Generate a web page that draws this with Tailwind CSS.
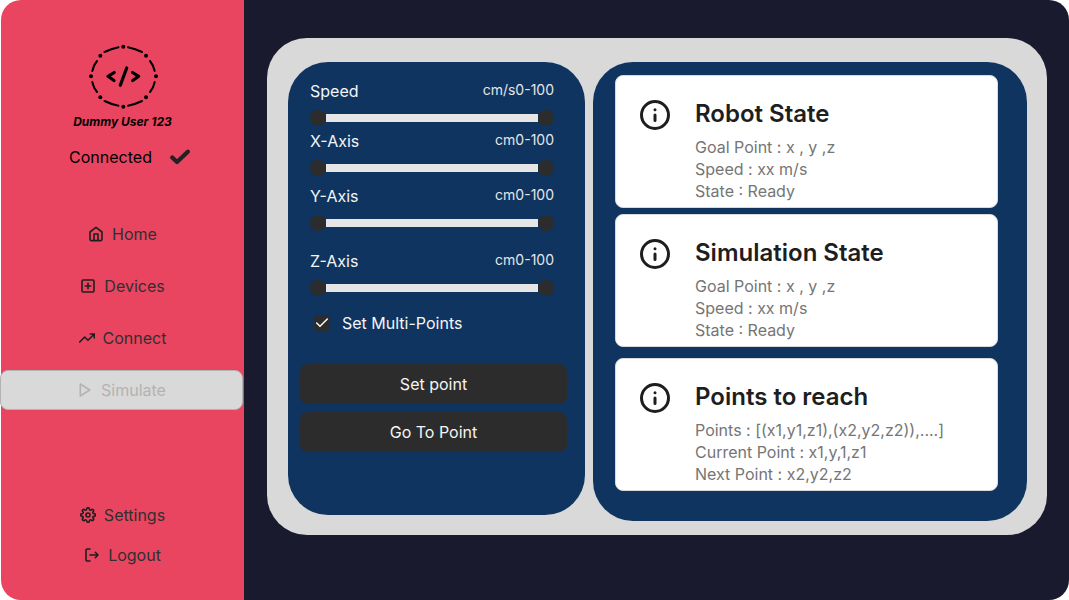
<!DOCTYPE html>
<html lang="en">
<head>
<meta charset="utf-8">
<meta name="viewport" content="width=device-width, initial-scale=1">
<title>Simulate</title>
<script src="https://cdn.jsdelivr.net/npm/@tailwindcss/browser@4"></script>
</head>
<body class="bg-white font-['Inter',sans-serif] text-base leading-[22px]">
<div class="ml-px flex min-h-screen">
  <aside class="flex w-[243px] shrink-0 flex-col rounded-l-[20px] bg-[#e94560] pb-[25px] pt-11 text-[#303030]">
    <div class="flex flex-col items-center text-black">
      <svg class="ml-0.5 h-[66px] w-[71px]" viewBox="0 0 71 66" fill="none" stroke="#000" stroke-linecap="round" stroke-linejoin="round" aria-hidden="true">
        <path stroke-width="2" d="M16.500 8Q23 4.800 30.500 3.300M40 3.300Q47.500 4.800 54 8M16.500 57Q23 60.200 30.500 61.700M54 57Q47.500 60.200 40 61.700M9 17Q5.300 21.500 4.300 27M4.300 38Q5.300 43.500 9 48M62 17Q65.700 21.500 66.700 27M66.700 38Q65.700 43.500 62 48"/>
        <g fill="#000" stroke="none">
          <circle cx="35.300" cy="2.700" r="2"/><circle cx="58" cy="11.700" r="2"/><circle cx="68" cy="32.300" r="2"/><circle cx="58" cy="53.300" r="2"/>
          <circle cx="35.300" cy="62.700" r="2"/><circle cx="12.300" cy="53.300" r="2"/><circle cx="3" cy="32.300" r="2"/><circle cx="12.300" cy="11.700" r="2"/>
        </g>
        <path stroke-width="3.200" d="M26.200 28.500L20 32.300L26 36.500M38.700 24L32.300 41.300M44.500 28.500L50.700 32.300L44.700 36.500"/>
      </svg>
      <p class="mt-px text-xs leading-[22px] font-bold italic">Dummy User 123</p>
      <div class="mt-[13px] flex items-center gap-[18px] pl-[14px]">
        <span>Connected</span>
        <svg class="h-4 w-5" viewBox="0 0 20 16" fill="none" stroke="#222" stroke-width="4.200" stroke-linecap="round" stroke-linejoin="round" aria-hidden="true"><path d="M2.300 8.500L7 13L17.800 2.800"/></svg>
      </div>
    </div>

    <nav class="mt-[46px] flex grow flex-col gap-3" aria-label="Main">
      <a href="#home" class="flex h-10 items-center justify-center gap-2">
        <svg class="size-4" viewBox="0 0 16 16" fill="none" stroke="#1e1e1e" stroke-width="1.600" stroke-linecap="round" stroke-linejoin="round" aria-hidden="true"><path d="M6 14.600V8H10V14.600M2 6L8 1.400L14 6V13.300A1.300 1.300 0 0 1 12.700 14.600H3.300A1.300 1.300 0 0 1 2 13.300Z"/></svg>
        Home
      </a>
      <a href="#devices" class="flex h-10 items-center justify-center gap-2">
        <svg class="size-4" viewBox="0 0 16 16" fill="none" stroke="#1e1e1e" stroke-width="1.600" stroke-linecap="round" stroke-linejoin="round" aria-hidden="true"><rect x="2" y="2" width="12" height="12" rx="1.300"/><path d="M8 5.300V10.700M5.300 8H10.700"/></svg>
        Devices
      </a>
      <a href="#connect" class="flex h-10 items-center justify-center gap-2">
        <svg class="size-4" viewBox="0 0 16 16" fill="none" stroke="#1e1e1e" stroke-width="1.600" stroke-linecap="round" stroke-linejoin="round" aria-hidden="true"><path d="M15.300 4L9 10.300L5.700 7L.7 12M11.300 4H15.300V8"/></svg>
        Connect
      </a>
      <a href="#simulate" aria-current="page" class="-ml-px mr-px flex h-10 items-center justify-center gap-2 rounded-lg border border-[#b3b3b3] bg-[#d9d9d9] text-[#b3b3b3]">
        <svg class="size-4" viewBox="0 0 16 16" fill="none" stroke="currentColor" stroke-width="1.600" stroke-linecap="round" stroke-linejoin="round" aria-hidden="true"><path d="M3.300 2L12.700 8L3.300 14Z"/></svg>
        Simulate
      </a>
    </nav>

    <nav class="flex flex-col" aria-label="Account">
      <a href="#settings" class="flex h-10 items-center justify-center gap-2">
        <svg class="size-4" viewBox="0 0 24 24" fill="none" stroke="#1e1e1e" stroke-width="2.400" stroke-linecap="round" stroke-linejoin="round" aria-hidden="true"><circle cx="12" cy="12" r="3"/><path d="M19.400 15a1.650 1.650 0 0 0 .33 1.820l.06.06a2 2 0 0 1-2.830 2.830l-.06-.06a1.650 1.650 0 0 0-1.820-.33 1.650 1.650 0 0 0-1 1.510V21a2 2 0 0 1-4 0v-.09A1.650 1.650 0 0 0 9 19.400a1.650 1.650 0 0 0-1.820.33l-.06.06a2 2 0 0 1-2.830-2.830l.06-.06a1.650 1.650 0 0 0 .33-1.820 1.650 1.650 0 0 0-1.510-1H3a2 2 0 0 1 0-4h.09A1.650 1.650 0 0 0 4.600 9a1.650 1.650 0 0 0-.33-1.820l-.06-.06a2 2 0 0 1 2.830-2.830l.06.06a1.650 1.650 0 0 0 1.820.33H9a1.650 1.650 0 0 0 1-1.510V3a2 2 0 0 1 4 0v.09a1.650 1.650 0 0 0 1 1.510 1.650 1.650 0 0 0 1.820-.33l.06-.06a2 2 0 0 1 2.830 2.830l-.06.06a1.650 1.650 0 0 0-.33 1.820V9a1.650 1.650 0 0 0 1.510 1H21a2 2 0 0 1 0 4h-.09a1.650 1.650 0 0 0-1.510 1z"/></svg>
        Settings
      </a>
      <a href="#logout" class="flex h-10 items-center justify-center gap-2">
        <svg class="size-4" viewBox="0 0 16 16" fill="none" stroke="#1e1e1e" stroke-width="1.600" stroke-linecap="round" stroke-linejoin="round" aria-hidden="true"><path d="M6 14H3.300A1.300 1.300 0 0 1 2 12.700V3.300A1.300 1.300 0 0 1 3.300 2H6M11.300 10.700L14 8L11.300 5.300M14 8H6"/></svg>
        Logout
      </a>
    </nav>
  </aside>

  <main class="grow rounded-r-[20px] bg-[#1a1a2e] pb-16 pl-[23px] pr-[22px] pt-[38px]">
    <div class="grid grid-cols-[297fr_434fr] items-start gap-2 rounded-[40px] bg-[#d9d9d9] pb-[14px] pl-[21px] pr-5 pt-6">

      <form class="rounded-[40px] bg-[#0f3460] px-3 pb-[63px] pt-[18px] text-[#f5f5f5]">
        <div class="pl-[10px] pr-[19px]">
          <fieldset class="mb-1">
            <div class="mb-2 flex items-start justify-between"><span>Speed</span><span class="text-sm leading-5 text-[#e6e6e6]">cm/s0-100</span></div>
            <div class="grid items-center">
              <div class="col-start-1 row-start-1 mx-4 h-2 bg-[#e6e6e6]"></div>
              <input type="range" aria-label="Speed minimum" min="0" max="100" value="0" class="pointer-events-none col-start-1 row-start-1 h-4 w-full appearance-none bg-transparent [&::-webkit-slider-thumb]:pointer-events-auto [&::-webkit-slider-thumb]:size-4 [&::-webkit-slider-thumb]:appearance-none [&::-webkit-slider-thumb]:rounded-full [&::-webkit-slider-thumb]:bg-[#2c2c2c]">
              <input type="range" aria-label="Speed maximum" min="0" max="100" value="100" class="pointer-events-none col-start-1 row-start-1 h-4 w-full appearance-none bg-transparent [&::-webkit-slider-thumb]:pointer-events-auto [&::-webkit-slider-thumb]:size-4 [&::-webkit-slider-thumb]:appearance-none [&::-webkit-slider-thumb]:rounded-full [&::-webkit-slider-thumb]:bg-[#2c2c2c]">
            </div>
          </fieldset>
          <fieldset class="mb-[9px]">
            <div class="mb-2 flex items-start justify-between"><span>X-Axis</span><span class="text-sm leading-5 text-[#e6e6e6]">cm0-100</span></div>
            <div class="grid items-center">
              <div class="col-start-1 row-start-1 mx-4 h-2 bg-[#e6e6e6]"></div>
              <input type="range" aria-label="X-Axis minimum" min="0" max="100" value="0" class="pointer-events-none col-start-1 row-start-1 h-4 w-full appearance-none bg-transparent [&::-webkit-slider-thumb]:pointer-events-auto [&::-webkit-slider-thumb]:size-4 [&::-webkit-slider-thumb]:appearance-none [&::-webkit-slider-thumb]:rounded-full [&::-webkit-slider-thumb]:bg-[#2c2c2c]">
              <input type="range" aria-label="X-Axis maximum" min="0" max="100" value="100" class="pointer-events-none col-start-1 row-start-1 h-4 w-full appearance-none bg-transparent [&::-webkit-slider-thumb]:pointer-events-auto [&::-webkit-slider-thumb]:size-4 [&::-webkit-slider-thumb]:appearance-none [&::-webkit-slider-thumb]:rounded-full [&::-webkit-slider-thumb]:bg-[#2c2c2c]">
            </div>
          </fieldset>
          <fieldset class="mb-[19px]">
            <div class="mb-2 flex items-start justify-between"><span>Y-Axis</span><span class="text-sm leading-5 text-[#e6e6e6]">cm0-100</span></div>
            <div class="grid items-center">
              <div class="col-start-1 row-start-1 mx-4 h-2 bg-[#e6e6e6]"></div>
              <input type="range" aria-label="Y-Axis minimum" min="0" max="100" value="0" class="pointer-events-none col-start-1 row-start-1 h-4 w-full appearance-none bg-transparent [&::-webkit-slider-thumb]:pointer-events-auto [&::-webkit-slider-thumb]:size-4 [&::-webkit-slider-thumb]:appearance-none [&::-webkit-slider-thumb]:rounded-full [&::-webkit-slider-thumb]:bg-[#2c2c2c]">
              <input type="range" aria-label="Y-Axis maximum" min="0" max="100" value="100" class="pointer-events-none col-start-1 row-start-1 h-4 w-full appearance-none bg-transparent [&::-webkit-slider-thumb]:pointer-events-auto [&::-webkit-slider-thumb]:size-4 [&::-webkit-slider-thumb]:appearance-none [&::-webkit-slider-thumb]:rounded-full [&::-webkit-slider-thumb]:bg-[#2c2c2c]">
            </div>
          </fieldset>
          <fieldset class="mb-4">
            <div class="mb-2 flex items-start justify-between"><span>Z-Axis</span><span class="text-sm leading-5 text-[#e6e6e6]">cm0-100</span></div>
            <div class="grid items-center">
              <div class="col-start-1 row-start-1 mx-4 h-2 bg-[#e6e6e6]"></div>
              <input type="range" aria-label="Z-Axis minimum" min="0" max="100" value="0" class="pointer-events-none col-start-1 row-start-1 h-4 w-full appearance-none bg-transparent [&::-webkit-slider-thumb]:pointer-events-auto [&::-webkit-slider-thumb]:size-4 [&::-webkit-slider-thumb]:appearance-none [&::-webkit-slider-thumb]:rounded-full [&::-webkit-slider-thumb]:bg-[#2c2c2c]">
              <input type="range" aria-label="Z-Axis maximum" min="0" max="100" value="100" class="pointer-events-none col-start-1 row-start-1 h-4 w-full appearance-none bg-transparent [&::-webkit-slider-thumb]:pointer-events-auto [&::-webkit-slider-thumb]:size-4 [&::-webkit-slider-thumb]:appearance-none [&::-webkit-slider-thumb]:rounded-full [&::-webkit-slider-thumb]:bg-[#2c2c2c]">
            </div>
          </fieldset>
          <div class="flex items-center gap-3 pl-1">
            <span class="grid size-4 place-items-center">
              <input id="multi" type="checkbox" checked class="peer col-start-1 row-start-1 size-4 appearance-none rounded bg-[#2c2c2c]">
              <svg class="pointer-events-none invisible col-start-1 row-start-1 size-4 peer-checked:visible" viewBox="0 0 16 16" fill="none" stroke="#f5f5f5" stroke-width="1.600" stroke-linecap="round" stroke-linejoin="round" aria-hidden="true"><path d="M13.300 4L6 11.300L2.700 8"/></svg>
            </span>
            <label for="multi">Set Multi-Points</label>
          </div>
        </div>
        <div class="mr-1.5 mt-[30px] flex flex-col gap-2">
          <button type="button" class="h-10 rounded-lg bg-[#2c2c2c]">Set point</button>
          <button type="button" class="h-10 rounded-lg bg-[#2c2c2c]">Go To Point</button>
        </div>
      </form>

      <div class="rounded-[40px] bg-[#0f3460] pb-[30px] pl-[22px] pr-[29px] pt-[13px] text-[#757575]">
        <section class="mb-1.5 flex gap-6 rounded-lg border border-[#d9d9d9] bg-white px-[23px] pb-[5px] pt-[23px]">
          <svg class="size-8 shrink-0" viewBox="0 0 32 32" fill="none" stroke="#1e1e1e" stroke-width="3" stroke-linecap="round" aria-hidden="true"><circle cx="16" cy="16" r="13.500"/><path d="M16 21.500V16M16 10.700H16.010"/></svg>
          <div>
            <h2 class="mb-2 text-2xl font-semibold leading-[29px] text-[#1e1e1e]">Robot State</h2>
            <p>Goal Point : x , y ,z</p>
            <p>Speed : xx m/s</p>
            <p>State : Ready</p>
          </div>
        </section>
        <section class="mb-[11px] flex gap-6 rounded-lg border border-[#d9d9d9] bg-white px-[23px] pb-[5px] pt-[23px]">
          <svg class="size-8 shrink-0" viewBox="0 0 32 32" fill="none" stroke="#1e1e1e" stroke-width="3" stroke-linecap="round" aria-hidden="true"><circle cx="16" cy="16" r="13.500"/><path d="M16 21.500V16M16 10.700H16.010"/></svg>
          <div>
            <h2 class="mb-2 text-2xl font-semibold leading-[29px] text-[#1e1e1e]">Simulation State</h2>
            <p>Goal Point : x , y ,z</p>
            <p>Speed : xx m/s</p>
            <p>State : Ready</p>
          </div>
        </section>
        <section class="flex gap-6 rounded-lg border border-[#d9d9d9] bg-white px-[23px] pb-[5px] pt-[23px]">
          <svg class="size-8 shrink-0" viewBox="0 0 32 32" fill="none" stroke="#1e1e1e" stroke-width="3" stroke-linecap="round" aria-hidden="true"><circle cx="16" cy="16" r="13.500"/><path d="M16 21.500V16M16 10.700H16.010"/></svg>
          <div>
            <h2 class="mb-2 text-2xl font-semibold leading-[29px] text-[#1e1e1e]">Points to reach</h2>
            <p>Points : [(x1,y1,z1),(x2,y2,z2)),....]</p>
            <p>Current Point : x1,y,1,z1</p>
            <p>Next Point : x2,y2,z2</p>
          </div>
        </section>
      </div>
    </div>
  </main>
</div>
</body>
</html>
